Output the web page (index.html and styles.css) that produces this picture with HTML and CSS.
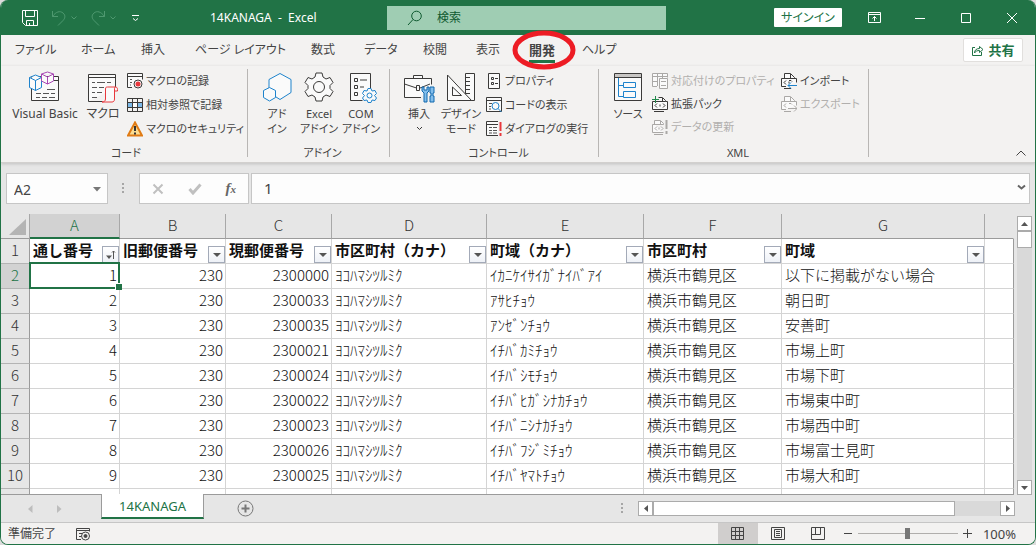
FILE: index.html
```html
<!DOCTYPE html>
<html lang="ja">
<head>
<meta charset="utf-8">
<title>14KANAGA - Excel</title>
<link rel="stylesheet" href="styles.css">
</head>
<body>
<div class="window">
  <header class="titlebar">
    <div class="quick">
      <button class="qbtn save" aria-label="上書き保存"><svg width="18" height="18" viewBox="0 0 18 18"><path d="M1.5 1.5h15v15h-12l-3-3zM4.500 1.500v6h9v-6M5.500 16.500v-5h7v5M8.500 14v2"/></svg></button>
      <button class="qbtn dim undo" aria-label="元に戻す"><svg width="28" height="18" viewBox="0 0 28 18"><path d="M1.500 2v5.500h5.500M1.500 7.500C5 2.500 9 1.500 12 4s2 5.500 0 7.500l-5 5M20.500 7.500l2.500 2.500 2.500-2.500"/></svg></button>
      <button class="qbtn dim redo" aria-label="やり直し"><svg width="28" height="18" viewBox="0 0 28 18"><path d="M14.500 2v5.500H9M14.500 7.500C11 2.500 7 1.500 4 4s-2 5.500 0 7.500l5 5M20.500 7.500l2.500 2.500 2.500-2.500"/></svg></button>
      <button class="qbtn more" aria-label="カスタマイズ"><svg width="10" height="10" viewBox="0 0 10 10"><path d="M1 2.500h7M2 5.500l2.500 2 2.500-2"/></svg></button>
    </div>
    <div class="doc-title">14KANAGA  -  Excel</div>
    <label class="search"><svg width="16" height="16" viewBox="0 0 16 16"><circle cx="9.500" cy="6" r="4.800"/><path d="M6 9.500L1 15"/></svg><input type="text" placeholder="検索" aria-label="検索"></label>
    <div class="caption">
      <button class="signin">サインイン</button>
      <button class="cap" aria-label="リボンの表示オプション"><svg width="13" height="11" viewBox="0 0 13 11"><path d="M.5.5h12v10H.5zM.5 2.500h12M6.500 9V4.500M4.500 6.500l2-2 2 2"/></svg></button>
      <button class="cap" aria-label="最小化"><svg width="10" height="10" viewBox="0 0 10 10"><path d="M0 5.500h10"/></svg></button>
      <button class="cap" aria-label="最大化"><svg width="10" height="10" viewBox="0 0 10 10"><path d="M.5.500h9v9h-9z"/></svg></button>
      <button class="cap" aria-label="閉じる"><svg width="10" height="10" viewBox="0 0 10 10"><path d="M0 0l10 10M10 0L0 10"/></svg></button>
    </div>
  </header>

  <nav class="tabs">
    <button>ファイル</button><button>ホーム</button><button>挿入</button><button>ページ レイアウト</button><button>数式</button><button>データ</button><button>校閲</button><button>表示</button>
    <button class="current">開発<svg class="ring" width="66" height="42" viewBox="0 0 66 42"><ellipse cx="33" cy="21" rx="29" ry="17"/></svg></button>
    <button>ヘルプ</button>
    <button class="share"><svg width="13" height="13" viewBox="0 0 13 13"><path d="M4 3.500H1.500v8h9V8M3.500 9c0-3 2-4.500 5-4.500V2.500l3.500 3-3.500 3v-2c-2 0-4 .5-5 2.500z"/></svg>共有</button>
  </nav>

  <section class="ribbon">
    <div class="group g-code">
      <div class="tools">
        <button class="big"><svg class="ic" width="32" height="32" viewBox="0 0 32 32"><path class="pg" d="M2.500 5.500h27v24h-27z"/><path class="ln" d="M7 22.500h5M14 22.500h6M22 22.500h4M7 26.500h4M13 26.500h5M20 26.500h6M18 18.500h8"/><path class="pg thin" d="M13 9.500h16"/><path class="blue wh" d="M.5 6.500l6-2.500 6 2.500v10l-6 3-6-3zM.5 6.500l6 3 6-3M6.500 9.500v10"/><path class="purple wh" d="M12.500 3l6-2 6 2v7l-6 3-6-3zM12.500 3l6 3 6-3M18.500 6v7"/></svg><span>Visual Basic</span></button>
        <button class="big"><svg class="ic" width="32" height="32" viewBox="0 0 32 32"><path class="pg" d="M1.500 30.500v-27h27v13M1.500 30.500h14M1.500 6.500h27"/><path class="ln" d="M5 11.500h3M10 11.500h8M20 11.500h4M5 16.500h5M12 16.500h5M5 21.500h3M10 21.500h5M5 26.500h5"/><path class="red wh" d="M18.500 28v-10c0-2 1-2 2-2h8c2 0 2 2 2 4h-3v8c0 2-1 3-2.500 3h-10c2 0 3.500-1 3.500-3zM27.500 20v-2c0-1 0-2 1-2"/></svg><span>マクロ</span></button>
        <div class="list">
          <button><svg class="ic" width="16" height="16" viewBox="0 0 16 16"><path class="pg" d="M5 14.500H.5v-14h15v6M.5 3.500h15"/><path class="ln" d="M3 6.500h2M3 9.500h2M3 12h1"/><circle class="pg" cx="11" cy="11" r="4"/><circle class="fr" cx="11" cy="11" r="2.500"/></svg>マクロの記録</button>
          <button><svg class="ic" width="16" height="16" viewBox="0 0 16 16"><path class="fb" d="M0 5h16v6H0z"/><path class="fw" d="M6 5h4v6H6z"/><path class="pg nf" d="M.5 1.500h15v13H.5zM.5 5.500h15M.5 10.500h15M5.500 1v13M10.500 1v13"/></svg>相対参照で記録</button>
          <button><svg class="ic" width="16" height="16" viewBox="0 0 16 16"><path class="warn" d="M8 1.500L15 14.500H1z"/><path class="bang" d="M8 5v5M8 11.500v2"/></svg>マクロのセキュリティ</button>
        </div>
      </div>
      <div class="gname">コード</div>
    </div>
    <div class="group g-addin">
      <div class="tools">
        <button class="big"><svg class="ic" width="32" height="32" viewBox="0 0 32 32"><path class="blue wh" d="M8 8.500L19 2.500l11 6v13L19 28.500 8 21.500z"/><path class="blue wh" d="M2.500 19.500l6-3 6 3v7l-6 3.500-6-3.500z"/></svg><span>アド<br>イン</span></button>
        <button class="big"><svg class="ic" width="32" height="32" viewBox="0 0 32 32"><path class="pg" d="M13 2h6l1 4 3 2 4-1.500 3 5-3 3v3l3 3-3 5-4-1.500-3 2-1 4h-6l-1-4-3-2-4 1.500-3-5 3-3v-3l-3-3 3-5L9 8l3-2z"/><circle class="pg" cx="16" cy="16" r="5.500"/></svg><span>Excel<br>アドイン</span></button>
        <button class="big"><svg class="ic" width="32" height="32" viewBox="0 0 32 32"><path class="pg" d="M25.500 17V2.500h-20v27h12"/><path class="pg thin" d="M9.500 7.500h3v3h-3zM9.500 14.500h3v3h-3zM9.500 21.500h3v3h-3zM15 9h7M15 16h4"/><path class="blue wh" d="M23 17.500h3l1 2.500 3-.5 1.500 3-2 2 2 2.500-1.500 2.500-3-.5-1 2.500h-3l-1-2.500-3 .5-1.500-2.500 2-2.500-2-2 1.500-3 3 .5z"/><circle class="blue nf" cx="24.500" cy="24.500" r="2.500"/></svg><span>COM<br>アドイン</span></button>
      </div>
      <div class="gname">アドイン</div>
    </div>
    <div class="group g-ctrl">
      <div class="tools">
        <button class="big"><svg class="ic" width="32" height="32" viewBox="0 0 32 32"><path class="pg" d="M18 26.500H1.500v-19h27v6M10.500 7V4.500h9V7M1.500 13l12 4M17 17l10-4M13.500 14.500h3v5h-3z"/><path class="tool" d="M19 16v4l2 2v9h3v-9l2-2v-4h-2v3h-3v-3zM27 16h4v6h-1v3h1v6h-4v-6h1v-3h-1z"/></svg><span>挿入</span><svg class="ic" width="10" height="14" viewBox="0 0 10 14"><path class="pg nf" d="M3 6l2.500 2.500L8 6"/></svg></button>
        <button class="big"><svg class="ic" width="32" height="32" viewBox="0 0 32 32"><path class="pg" d="M20.500 2.500h9v27h-9z"/><path class="pg thin" d="M21 6.500h4M21 10.500h4M21 14.500h4M21 18.500h4M21 22.500h4"/><path class="pg" d="M2.500 4v25.500h24zM7.500 16v8.500h9z"/></svg><span>デザイン<br>モード</span></button>
        <div class="list">
          <button><svg class="ic" width="16" height="16" viewBox="0 0 16 16"><path class="pg" d="M2.500.5h11v15h-11z"/><path class="pg thin" d="M5.500 4.500h2v2h-2zM5.500 9.500h2v2h-2zM9 5.500h3M9 10.500h3"/></svg>プロパティ</button>
          <button><svg class="ic" width="16" height="16" viewBox="0 0 16 16"><path class="pg" d="M.5.500h15v14H.5zM.5 3.500h15"/><path class="ln" d="M3 6.500h3M3 9.500h2M3 12h2"/><circle class="blue wh" cx="9.500" cy="9" r="3.500"/><path class="blue" d="M12 11.500l3.500 3.500"/></svg>コードの表示</button>
          <button><svg class="ic" width="16" height="16" viewBox="0 0 16 16"><path class="pg" d="M12 14.500H.5V.500H12M.5 3.500H12"/><path class="ln" d="M3 6.500h3M7 6.500h4M3 9.500h3M7 9.500h4M3 12h3M7 12h4"/><path class="excl" d="M14.500 1v9M14.500 12v3"/></svg>ダイアログの実行</button>
        </div>
      </div>
      <div class="gname">コントロール</div>
    </div>
    <div class="group g-xml">
      <div class="tools">
        <button class="big"><svg class="ic" width="32" height="32" viewBox="0 0 32 32"><path class="pg" d="M2.500 2.500h27v27h-27z"/><path class="fg" d="M3 3h26v3H3z"/><path class="pg thin" d="M3 6.500h26"/><path class="blue" d="M6.500 7v18.500h5M6.500 14.500h5M11.500 11.500h12v5h-12zM11.500 20.500h12v6h-12z"/></svg><span>ソース</span></button>
        <div class="list">
          <button disabled><svg class="ic" width="16" height="16" viewBox="0 0 16 16"><path class="pg" d="M5 13.500H.5V.500h15v4M.5 3.500h15M.5 8.500H6M5.500 1v12M10.500 1v4"/><path class="pg" d="M7.500 5.500h8v10h-8z"/><path class="ln" d="M9 8.500h5M9 12.500h5"/></svg>対応付けのプロパティ</button>
          <button><svg class="ic" width="16" height="16" viewBox="0 0 16 16"><path class="pg" d="M6.500 1.500h4l3 3v1H.5v8h15v-8h-2M10.500 2v3.500M2 15.500h10M5 7.500l-2 2 2 2M11 7.500l2 2-2 2M8 8.500v2"/><path class="green" d="M3.500 0v7M0 3.500h7"/></svg>拡張パック</button>
          <button disabled><svg class="ic" width="16" height="16" viewBox="0 0 16 16"><path class="pg" d="M2.500 5V1.500h6l3 3v1H.5v8h11M8.500 2v3.500M2 15.500h9M5 7.500l-2 2 2 2M9 7.500l2 2-2 2M7 8.500v2"/><path class="excl" d="M14.500 1v9M14.500 12v3"/></svg>データの更新</button>
        </div>
        <div class="list">
          <button><svg class="ic" width="16" height="16" viewBox="0 0 16 16"><path class="pg" d="M3.500 5V.500h6l4 4v1M9.500 1v4M5 13.500H.5v-8h15v4M3 15.500h7M5 7.500l-2 2 2 2M8 7.500h2l1 1M8 8.500v2"/><path class="blue nf" d="M16 12.500H7M10 9.500l-3 3 3 3"/></svg>インポート</button>
          <button disabled><svg class="ic" width="16" height="16" viewBox="0 0 16 16"><path class="pg" d="M3.500 5V.500h6l4 4v1M9.500 1v4M5 13.500H.5v-8h15v4M3 15.500h7M5 7.500l-2 2 2 2M8 7.500h2l1 1M7 12.500h9M13 9.500l3 3-3 3"/></svg>エクスポート</button>
        </div>
      </div>
      <div class="gname">XML</div>
    </div>
    <button class="collapse" aria-label="リボンを折りたたむ"><svg width="12" height="8" viewBox="0 0 12 8"><path d="M1.500 6.500L6 2l4.500 4.500"/></svg></button>
  </section>

  <section class="formula">
    <div class="namebox"><input type="text" value="A2" aria-label="名前ボックス"><svg width="8" height="5" viewBox="0 0 8 5"><path d="M0 0h8L4 4.500z"/></svg></div>
    <span class="grip"></span>
    <div class="fbtns">
      <button aria-label="キャンセル"><svg width="12" height="12" viewBox="0 0 12 12"><path class="off" d="M1.500 1.500l9 9M10.500 1.500l-9 9"/></svg></button>
      <button aria-label="入力"><svg width="14" height="12" viewBox="0 0 14 12"><path class="off heavy" d="M1.500 6l3.500 4L12.500 1.500"/></svg></button>
      <button class="fx" aria-label="関数の挿入"><i>f<small>x</small></i></button>
    </div>
    <div class="fbox"><input type="text" value="1" aria-label="数式バー"><svg width="9" height="7" viewBox="0 0 9 7"><path class="chev" d="M1 1.500l3.500 3L8 1.500"/></svg></div>
  </section>

  <main class="sheet">
    <div class="grid">
      <table>
        <colgroup><col class="c-n"><col class="c-a"><col class="c-b"><col class="c-c"><col class="c-d"><col class="c-e"><col class="c-f"><col class="c-g"><col></colgroup>
        <thead><tr><th class="corner"><svg width="17" height="16" viewBox="0 0 17 16"><path d="M17 0v16H0z"/></svg></th><th class="on">A</th><th>B</th><th>C</th><th>D</th><th>E</th><th>F</th><th>G</th><th></th></tr></thead>
        <tbody>
          <tr class="names"><th>1</th>
            <td><div>通し番号<button class="filter" aria-label="並べ替え"><svg width="15" height="15" viewBox="0 0 15 15"><path d="M3 8.500h6l-3 3.500z"/><path class="up" d="M10.500 12V4M9 5.500L10.500 4 12 5.500"/></svg></button></div></td>
            <td><div>旧郵便番号<button class="filter" aria-label="フィルター"><svg width="15" height="15" viewBox="0 0 15 15"><path d="M4 6h8l-4 4z"/></svg></button></div></td>
            <td><div>現郵便番号<button class="filter" aria-label="フィルター"><svg width="15" height="15" viewBox="0 0 15 15"><path d="M4 6h8l-4 4z"/></svg></button></div></td>
            <td><div>市区町村（カナ）<button class="filter" aria-label="フィルター"><svg width="15" height="15" viewBox="0 0 15 15"><path d="M4 6h8l-4 4z"/></svg></button></div></td>
            <td><div>町域（カナ）<button class="filter" aria-label="フィルター"><svg width="15" height="15" viewBox="0 0 15 15"><path d="M4 6h8l-4 4z"/></svg></button></div></td>
            <td><div>市区町村<button class="filter" aria-label="フィルター"><svg width="15" height="15" viewBox="0 0 15 15"><path d="M4 6h8l-4 4z"/></svg></button></div></td>
            <td><div>町域<button class="filter" aria-label="フィルター"><svg width="15" height="15" viewBox="0 0 15 15"><path d="M4 6h8l-4 4z"/></svg></button></div></td>
            <td></td></tr>
          <tr><th class="on">2</th><td class="num sel">1</td><td class="num">230</td><td class="num">2300000</td><td>ﾖｺﾊﾏｼﾂﾙﾐｸ</td><td>ｲｶﾆｹｲｻｲｶﾞﾅｲﾊﾞｱｲ</td><td>横浜市鶴見区</td><td>以下に掲載がない場合</td><td></td></tr>
          <tr><th>3</th><td class="num">2</td><td class="num">230</td><td class="num">2300033</td><td>ﾖｺﾊﾏｼﾂﾙﾐｸ</td><td>ｱｻﾋﾁｮｳ</td><td>横浜市鶴見区</td><td>朝日町</td><td></td></tr>
          <tr><th>4</th><td class="num">3</td><td class="num">230</td><td class="num">2300035</td><td>ﾖｺﾊﾏｼﾂﾙﾐｸ</td><td>ｱﾝｾﾞﾝﾁｮｳ</td><td>横浜市鶴見区</td><td>安善町</td><td></td></tr>
          <tr><th>5</th><td class="num">4</td><td class="num">230</td><td class="num">2300021</td><td>ﾖｺﾊﾏｼﾂﾙﾐｸ</td><td>ｲﾁﾊﾞｶﾐﾁｮｳ</td><td>横浜市鶴見区</td><td>市場上町</td><td></td></tr>
          <tr><th>6</th><td class="num">5</td><td class="num">230</td><td class="num">2300024</td><td>ﾖｺﾊﾏｼﾂﾙﾐｸ</td><td>ｲﾁﾊﾞｼﾓﾁｮｳ</td><td>横浜市鶴見区</td><td>市場下町</td><td></td></tr>
          <tr><th>7</th><td class="num">6</td><td class="num">230</td><td class="num">2300022</td><td>ﾖｺﾊﾏｼﾂﾙﾐｸ</td><td>ｲﾁﾊﾞﾋｶﾞｼﾅｶﾁｮｳ</td><td>横浜市鶴見区</td><td>市場東中町</td><td></td></tr>
          <tr><th>8</th><td class="num">7</td><td class="num">230</td><td class="num">2300023</td><td>ﾖｺﾊﾏｼﾂﾙﾐｸ</td><td>ｲﾁﾊﾞﾆｼﾅｶﾁｮｳ</td><td>横浜市鶴見区</td><td>市場西中町</td><td></td></tr>
          <tr><th>9</th><td class="num">8</td><td class="num">230</td><td class="num">2300026</td><td>ﾖｺﾊﾏｼﾂﾙﾐｸ</td><td>ｲﾁﾊﾞﾌｼﾞﾐﾁｮｳ</td><td>横浜市鶴見区</td><td>市場富士見町</td><td></td></tr>
          <tr><th>10</th><td class="num">9</td><td class="num">230</td><td class="num">2300025</td><td>ﾖｺﾊﾏｼﾂﾙﾐｸ</td><td>ｲﾁﾊﾞﾔﾏﾄﾁｮｳ</td><td>横浜市鶴見区</td><td>市場大和町</td><td></td></tr>
          <tr><th></th><td></td><td></td><td></td><td></td><td></td><td></td><td></td><td></td></tr>
        </tbody>
      </table>
    </div>
    <div class="vscroll">
      <button aria-label="上へ"><svg width="7" height="4" viewBox="0 0 7 4"><path d="M0 4h7L3.500 0z"/></svg></button>
      <div class="thumb"></div>
      <button class="end" aria-label="下へ"><svg width="7" height="4" viewBox="0 0 7 4"><path d="M0 0h7L3.500 4z"/></svg></button>
    </div>
  </main>

  <section class="sheetbar">
    <div class="nav"><svg width="5" height="8" viewBox="0 0 5 8"><path d="M4.500 0v8L0 4z"/></svg><svg width="5" height="8" viewBox="0 0 5 8"><path d="M0 0v8l4.500-4z"/></svg></div>
    <button class="stab">14KANAGA</button>
    <button class="add" aria-label="新しいシート"><svg width="17" height="17" viewBox="0 0 17 17"><circle cx="8.500" cy="8.500" r="7.500"/><path d="M8.500 4.500v8M4.500 8.500h8"/></svg></button>
    <span class="grip"></span>
    <div class="hscroll">
      <button aria-label="左へ"><svg width="4" height="7" viewBox="0 0 4 7"><path d="M4 0v7L0 3.500z"/></svg></button>
      <div class="thumb"></div>
      <button class="end" aria-label="右へ"><svg width="4" height="7" viewBox="0 0 4 7"><path d="M0 0v7l4-3.500z"/></svg></button>
    </div>
  </section>

  <footer class="status">
    <span class="ready">準備完了</span>
    <button class="rec" aria-label="マクロの記録"><svg width="15" height="14" viewBox="0 0 15 14"><path d="M5 12.500H.5V1.500h13v3M.5 3.500h13M3 6.500h3M3 9.500h2"/><circle cx="9.500" cy="9" r="4"/><circle class="dot" cx="9.500" cy="9" r="1.500"/></svg></button>
    <div class="views">
      <button class="active" aria-label="標準"><svg width="14" height="14" viewBox="0 0 14 14"><path d="M.5.500h12v12H.5zM4.500.500v12M8.500.500v12M.5 4.500h12M.5 8.500h12"/></svg></button>
      <button aria-label="ページ レイアウト"><svg width="14" height="14" viewBox="0 0 14 14"><path d="M.5.500h13v12H.5zM3.500 2.500h7v8h-7zM5 4.500h4M5 6.500h4M5 8.500h4"/></svg></button>
      <button aria-label="改ページ プレビュー"><svg width="14" height="14" viewBox="0 0 14 14"><path d="M.5.500h13v12H.5zM4.500.500v7M9.500.500v7M.5 7.500h9"/></svg></button>
    </div>
    <button class="zoom" aria-label="縮小"><svg width="9" height="9" viewBox="0 0 9 9"><path d="M0 4.500h8"/></svg></button>
    <input class="slider" type="range" min="0" max="100" value="50" aria-label="ズーム">
    <button class="zoom" aria-label="拡大"><svg width="9" height="9" viewBox="0 0 9 9"><path d="M0 4.500h9M4.500 0v9"/></svg></button>
    <span class="pct">100%</span>
  </footer>
</div>
</body>
</html>
```
FILE: styles.css
```css
* { box-sizing: border-box; }
html, body { height: 100%; margin: 0; }
body {
  background: #dcdcdc;
  color: #444;
  font: 12px/16px "Noto Sans", "Noto Sans CJK JP", sans-serif;
  font-feature-settings: "palt";
}
button, input { font: inherit; font-feature-settings: inherit; color: inherit; }
button { background: none; border: 0; padding: 0; white-space: nowrap; }
input { min-width: 0; border: 0; padding: 0; outline: 0; background: none; }
svg { display: block; flex: none; fill: none; stroke: currentColor; }

.window {
  height: 100vh;
  display: flex;
  flex-direction: column;
  border: 1px solid #217346;
  border-top: 0;
  border-radius: 8px;
  overflow: hidden;
  background: #e6e6e6;
}

/* title bar */
.titlebar {
  flex: none;
  height: 35px;
  display: grid;
  grid-template-columns: 209px 177px minmax(120px, 279px) 1fr;
  align-items: center;
  background: #217346;
  color: #fff;
}
.quick { display: flex; align-items: center; padding-left: 20px; }
.save { margin-right: 12px; }
.undo, .redo { margin-right: 11px; }
.dim { color: #4f9970; }
.more { margin-left: 2px; }
.doc-title { white-space: pre; }
.search {
  height: 24px;
  display: flex;
  align-items: center;
  gap: 14px;
  padding-left: 20px;
  background: #9fcdb3;
  color: #0f5a30;
}
.search input { flex: 1; }
.search input::placeholder { color: inherit; opacity: 1; }
.caption { display: flex; align-items: center; justify-content: flex-end; }
.signin { width: 68px; height: 19px; margin-right: 9px; background: #fff; color: #217346; border-radius: 1px; }
.cap { width: 46px; display: flex; justify-content: center; }

/* ribbon tabs */
.tabs {
  flex: none;
  height: 31px;
  display: grid;
  grid-template-columns: 66px 60px 54px 116px 53px 59px 53px 53px 53px 60px 1fr;
  align-items: center;
  padding: 0 12px 1px 14px;
  background: #f3f2f1;
}
.tabs button { height: 26px; justify-self: start; text-align: left; }
.tabs .current { position: relative; font-size: 13px; font-weight: bold; border-bottom: 3px solid #217346; padding-top: 3px; }
.ring { position: absolute; left: -18px; top: -8px; stroke: #ed1c24; stroke-width: 5; pointer-events: none; z-index: 2; }
.tabs .share {
  justify-self: end;
  width: 60px;
  height: 24px;
  display: flex;
  align-items: center;
  justify-content: center;
  gap: 4px;
  background: #fff;
  border: 1px solid #e1dfdd;
  border-radius: 2px;
  color: #217346;
  font-size: 13px;
  font-weight: bold;
}

/* ribbon body */
.ribbon {
  flex: none;
  display: flex;
  padding: 3px 0 5px;
  background: #f3f2f1;
  border-bottom: 1px solid #d2d0ce;
  box-shadow: 0 1px 3px #c0c0c0;
}
.group { height: 88px; display: flex; flex-direction: column; border-right: 1px solid #b8b6b4; }
.tools { flex: 1; display: flex; min-height: 0; }
.gname { height: 16px; margin-bottom: -4px; text-align: center; font-size: 11px; }
.big { flex: none; display: flex; flex-direction: column; align-items: center; padding-top: 2px; }
.big span { line-height: 15px; padding-top: 3px; }
.list { flex: none; font-size: 11px; }
.list button { height: 24px; display: flex; align-items: center; gap: 3px; }
.list button:disabled { color: #b1afad; }
.g-code { width: 247px; padding-left: 4px; }
.g-code .big { width: 80px; }
.g-code .big + .big { width: 36px; margin-right: 6px; }
.g-addin { width: 142px; padding-left: 8px; }
.g-addin .big { width: 42px; font-size: 11px; }
.g-ctrl { width: 209px; padding-left: 9px; }
.g-ctrl .big { width: 40px; font-size: 11px; }
.g-ctrl .big + .big { width: 44px; margin-right: 3px; }
.g-xml { width: 270px; padding-left: 9px; }
.g-xml .big { width: 40px; margin-right: 4px; font-size: 11px; }
.g-xml .list { width: 129px; }
.g-xml .list:last-child { width: 84px; }
.g-xml .list button { height: 23px; }
.collapse { margin: auto 8px 0 auto; }

.ic .pg { stroke: #3b3a39; fill: #fafafa; }
.ic .thin { fill: none; }
.ic .ln { stroke: #555; }
.ic .blue { stroke: #1e83cc; }
.ic .purple { stroke: #a846b4; }
.ic .red { stroke: #e8383d; }
.ic .green { stroke: #218a4c; }
.ic .wh { fill: #fafafa; }
.ic .fr { fill: #e8383d; stroke: none; }
.ic .fb { fill: #7db9e8; stroke: none; }
.ic .fw { fill: #fff; stroke: none; }
.ic .fg { fill: #c8c6c4; stroke: none; }
.ic .warn { fill: #fbdc90; stroke: #e07b14; stroke-width: 2; }
.ic .bang { stroke: #333; stroke-width: 2; }
.ic .excl { stroke: #e8383d; stroke-width: 2; }
.ic .tool { fill: #83beec; stroke: #1068ae; }
.ic .nf { fill: none; }
button:disabled .ic .pg, button:disabled .ic .ln, button:disabled .ic .excl { stroke: #aaa8a6; }

/* formula bar */
.formula { flex: none; height: 51px; display: flex; padding: 10px 5px 10px 5px; font-size: 15px; }
.namebox, .fbtns, .fbox { height: 31px; display: flex; align-items: center; background: #fdfdfd; border: 1px solid #c6c6c6; }
.namebox { width: 102px; padding: 2px 6px 0 7px; font-size: 14px; }
.namebox input { flex: 1; }
.namebox svg { fill: #777; stroke: none; }
.grip {
  width: 2px;
  height: 11px;
  align-self: center;
  background: repeating-linear-gradient(#a6a6a6 0 2px, transparent 2px 4px);
}
.formula .grip { margin: 0 15px 0 14px; }
.fbtns { width: 110px; justify-content: space-around; margin-right: 2px; }
.off { stroke: #c0c0c0; stroke-width: 2; }
.heavy { stroke-width: 3; }
.fx { font-family: "Liberation Serif", serif; font-weight: bold; font-size: 15px; color: #666; }
.fx small { font-size: 11px; }
.fbox { flex: 1; padding: 0 3px 2px 12px; }
.fbox input { flex: 1; }
.chev { stroke: #666; stroke-width: 2; }

/* worksheet */
.sheet { flex: 1; min-height: 0; display: flex; }
.grid { flex: 1; min-width: 0; overflow: hidden; border-bottom: 1px solid #9b9b9b; }
table {
  width: 100%;
  table-layout: fixed;
  border-collapse: separate;
  border-spacing: 0;
  font: 300 15px/20px "Noto Sans CJK JP", sans-serif;
  font-feature-settings: normal;
  color: #111;
}
.c-n { width: 29px; }
.c-a { width: 90px; }
.c-b, .c-c { width: 106px; }
.c-d { width: 155px; }
.c-e { width: 157px; }
.c-f { width: 138px; }
.c-g { width: 203px; }
th, td { height: 25px; padding: 0 0 2px; white-space: nowrap; border-right: 1px solid #d4d4d4; border-bottom: 1px solid #d4d4d4; }
td { background: #fff; padding: 0 2px 3px 3px; }
td:last-child { border-right-color: #9b9b9b; }
.num { text-align: right; }
th { font-weight: inherit; color: #333; background: #e6e6e6; }
thead th { border-bottom-color: #9b9b9b; border-right-color: #a8a8a8; }
thead th:last-child { border-right-color: transparent; }
tbody th { border-right-color: #9b9b9b; border-bottom-color: #b4b4b4; }
th.on { background: #d2d2d2; color: #217346; }
thead th.on { border-bottom: 2px solid #217346; padding-bottom: 1px; }
.corner svg { margin: 4px 3px 0 auto; fill: #b4b4b4; stroke: none; }
.sel { position: relative; }
.sel::before { content: ""; position: absolute; inset: -2px -1px -1px -1px; border: 2px solid #217346; }
.sel::after { content: ""; position: absolute; right: -3px; bottom: -2px; width: 6px; height: 6px; background: #217346; border: 1px solid #fff; border-width: 1px 0 0 1px; }
.names td { font-weight: bold; padding: 0 0 0 3px; }
.names div { height: 24px; display: flex; justify-content: space-between; align-items: flex-end; line-height: 26px; }
.filter { flex: none; width: 17px; height: 17px; border: 1px solid #a3aab8; background: linear-gradient(#fff, #eef1f7); }
.filter svg { fill: #555; stroke: none; }
.filter .up { fill: none; stroke: #555; }

/* scroll bars */
.vscroll { width: 15px; margin: 2px 3px 0 3px; display: flex; flex-direction: column; background: #d9d9d9; }
.vscroll button, .hscroll button { flex: none; width: 15px; height: 15px; display: flex; align-items: center; justify-content: center; background: #fff; border: 1px solid #ababab; }
.vscroll svg, .hscroll svg { fill: #555; stroke: none; }
.vscroll .thumb { height: 17px; background: #fff; border: 1px solid #ababab; }
.vscroll .end { margin-top: auto; }
.sheetbar { flex: none; height: 28px; display: flex; padding-right: 20px; border-bottom: 1px solid #c6c6c6; }
.nav { width: 100px; display: flex; align-items: center; justify-content: flex-end; gap: 24px; padding-right: 39px; }
.nav svg { fill: #bdbdbd; stroke: none; }
.stab { width: 103px; height: 25px; margin-top: -1px; background: #fff; border: 1px solid #9b9b9b; border-width: 0 1px 2px; border-bottom-color: #217346; color: #217346; font-size: 13px; }
.add { margin: 0 auto 0 33px; color: #777; }
.add path { stroke-width: 2; }
.hscroll { width: 377px; height: 15px; display: flex; align-self: center; background: #d9d9d9; margin-left: 15px; }
.hscroll .thumb { width: 302px; background: #fff; border: 1px solid #ababab; }
.hscroll .end { margin-left: auto; }

/* status bar */
.status { flex: none; height: 21px; display: flex; align-items: center; padding: 0 19px 0 7px; background: #f3f2f1; }
.rec { margin-left: 20px; }
.rec .dot { fill: #444; }
.views { display: flex; height: 100%; margin: 0 6px 0 auto; }
.views button { width: 40px; display: flex; align-items: center; justify-content: center; }
.views .active { background: #d0cecd; }
.slider { appearance: none; width: 100px; height: 16px; margin: 0 5px; background: linear-gradient(#b0aeac, #b0aeac) center / 100% 1px no-repeat; }
.slider::-webkit-slider-thumb { appearance: none; width: 5px; height: 11px; background: #777; }
.pct { margin-left: 11px; font-size: 13px; }
```
